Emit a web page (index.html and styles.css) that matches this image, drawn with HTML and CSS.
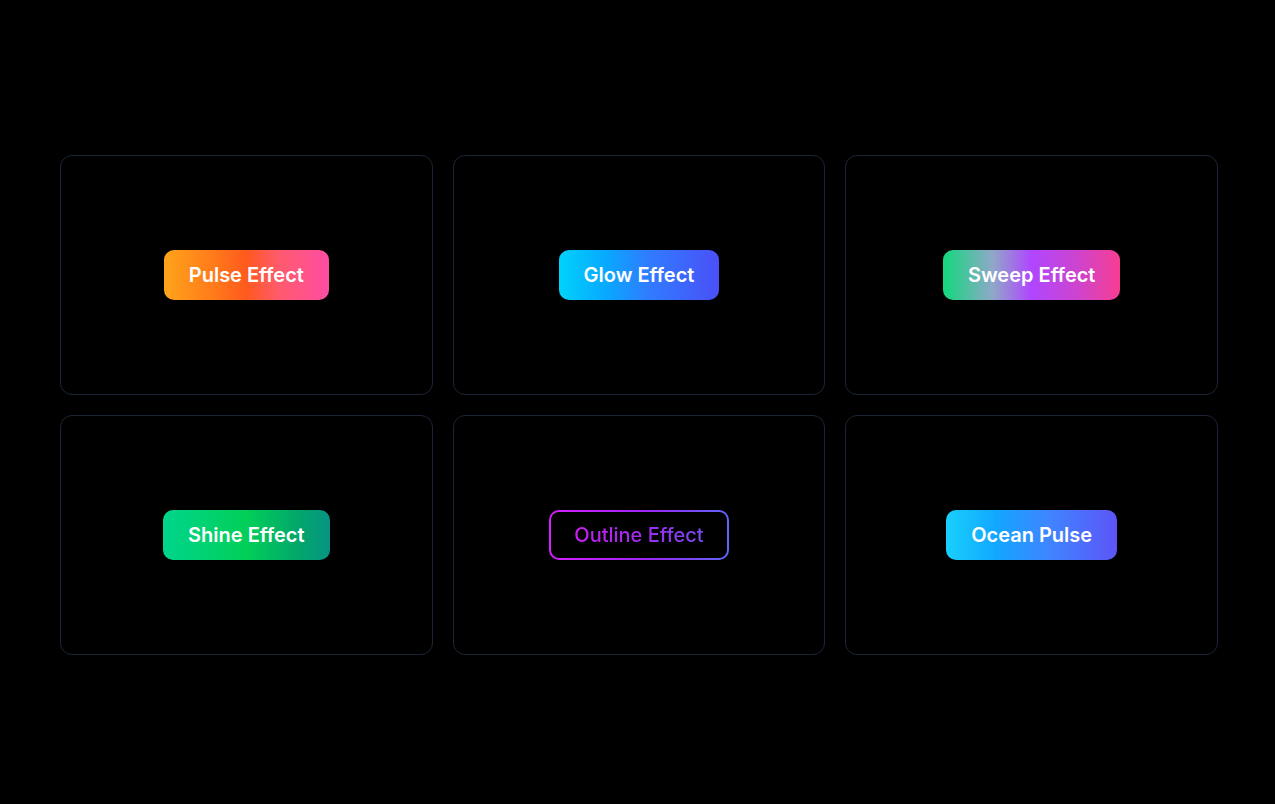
FILE: index.html
```html
<!DOCTYPE html>
<html>
<head>
<meta charset="utf-8">
<link rel="stylesheet" href="styles.css">
</head>
<body>
<div class="grid">
  <div class="card"><button class="btn pulse">Pulse Effect</button></div>
  <div class="card"><button class="btn glow">Glow Effect</button></div>
  <div class="card"><button class="btn sweep">Sweep Effect</button></div>
  <div class="card"><button class="btn shine">Shine Effect</button></div>
  <div class="card"><button class="btn outline"><span class="otext">Outline Effect</span></button></div>
  <div class="card"><button class="btn ocean">Ocean Pulse</button></div>
</div>
</body>
</html>
```
FILE: styles.css
```css
html, body { margin: 0; padding: 0; background: #000; }
body { width: 1275px; height: 804px; overflow: hidden; font-family: Inter, "Noto Sans", sans-serif; }
.grid {
  display: grid;
  grid-template-columns: repeat(3, 1fr);
  gap: 20px;
  padding: 155px 57px 0 60px;
}
.card {
  height: 238px;
  border: 1px solid #1c2536;
  border-radius: 12px;
  background: #000;
  display: flex;
  align-items: center;
  justify-content: center;
}
.btn {
  font-family: inherit;
  font-size: 20px;
  font-weight: 600;
  color: #fff;
  border: none;
  border-radius: 10px;
  height: 50px;
  padding: 0 25px;
  line-height: 50px;
  cursor: pointer;
}
.pulse { background: linear-gradient(90deg, #ffa41a 0%, #ff7a1a 30%, #ff5a1e 50%, #ff5a6e 70%, #ff4da3 100%); }
.glow { background: linear-gradient(90deg, #00d2fa 0%, #08a8ff 30%, #2f7dff 55%, #4a50f7 100%); }
.sweep { background: linear-gradient(90deg, #12d97c 0%, #8fa8c8 28%, #b046ff 50%, #cc44d0 75%, #f73d92 100%); }
.shine { background: linear-gradient(90deg, #00d58c 0%, #02cf58 50%, #02a86a 80%, #069482 100%); }
.ocean { background: linear-gradient(90deg, #18d0fb 0%, #12a6ff 30%, #3f85ff 60%, #5c55f8 100%); }
.outline {
  background: linear-gradient(#000, #000) padding-box,
              linear-gradient(90deg, #d81fff 0%, #9b27f5 55%, #6066f6 100%) border-box;
  border: 2px solid transparent;
  height: 50px;
  line-height: 46px;
  padding: 0 23px;
}
.otext {
  background: linear-gradient(90deg, #c81ef0 0%, #9b2cf0 55%, #7a4cf2 100%);
  -webkit-background-clip: text;
  background-clip: text;
  color: transparent;
  font-weight: 500;
}
```
